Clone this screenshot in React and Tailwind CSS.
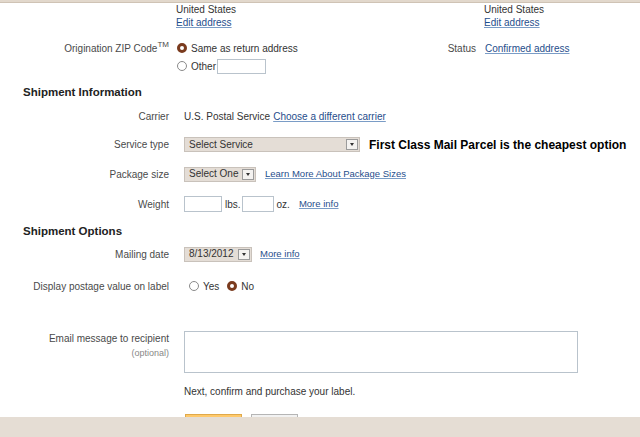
import React from 'react';

const font = { fontFamily: '"Liberation Sans", Arial, sans-serif' };

const Link = ({ children, className = '' }) => (
  <a href="#" className={`text-[#1f4e8c] underline underline-offset-1 decoration-[#7a9cc6] ${className}`}>{children}</a>
);

const Radio = ({ checked }) =>
  checked ? (
    <span className="inline-block w-[10px] h-[10px] rounded-full border-[3px] border-[#7a3b1e] bg-white shrink-0" />
  ) : (
    <span className="inline-block w-[10px] h-[10px] rounded-full border border-[#8a8a8a] bg-white shrink-0" />
  );

const Select = ({ text, width }) => (
  <div className={`flex items-center h-[15px] bg-[#e4ddd6] border border-[#c9c2bb] ${width}`}>
    <span className="flex-1 pl-[4px] text-[10px] text-[#333] leading-none">{text}</span>
    <span className="w-[12px] h-[11px] mr-[1px] bg-[#f4f2f0] border border-[#9b9b9b] flex items-center justify-center">
      <span className="w-0 h-0 border-l-[2px] border-r-[2px] border-t-[3px] border-l-transparent border-r-transparent border-t-[#333]" />
    </span>
  </div>
);

const Row = ({ label, h, children, className = '' }) => (
  <div className={`flex items-center ${h} ${className}`}>
    <div className="w-[169px] text-right text-[#4a4a4a] shrink-0">{label}</div>
    <div className="ml-[15px] flex items-center">{children}</div>
  </div>
);

export default function App() {
  return (
    <div className="relative w-[640px] h-[437px] overflow-hidden bg-white text-[10px] text-[#333]" style={font}>
      <div className="h-[3px] bg-[#e2d8cc] border-b border-[#cfc3b5]" />

      {/* addresses */}
      <div className="flex">
        <div className="w-[484px] pl-[176px]">
          <div className="h-[13px] leading-[13px]">United States</div>
          <div className="h-[14px] leading-[14px]"><Link>Edit address</Link></div>
        </div>
        <div>
          <div className="h-[13px] leading-[13px]">United States</div>
          <div className="h-[14px] leading-[14px]"><Link>Edit address</Link></div>
        </div>
      </div>

      {/* origination zip */}
      <div className="flex mt-[9px]">
        <div className="w-[440px]">
          <div className="flex items-center h-[18px]">
            <div className="w-[169px] text-right text-[#4a4a4a]">
              Origination ZIP Code<span className="text-[8px] relative -top-[5px]">TM</span>
            </div>
            <div className="ml-[8px] flex items-center gap-[4px]">
              <Radio checked />
              <span>Same as return address</span>
            </div>
          </div>
          <div className="flex items-center h-[18px] pl-[177px] gap-[4px]">
            <Radio />
            <span>Other</span>
            <span className="w-[49px] h-[15px] border border-[#b9c3cc] bg-white -ml-[3px]" />
          </div>
        </div>
        <div className="flex items-center h-[18px]">
          <span className="w-[36px] text-right text-[#4a4a4a]">Status</span>
          <Link className="ml-[9px]">Confirmed address</Link>
        </div>
      </div>

      {/* shipment information */}
      <div className="mt-[8px] h-[20px] flex items-center pl-[23px] text-[11.5px] font-bold text-[#222]">Shipment Information</div>

      <Row label="Carrier" h="h-[27px]">
        <span>U.S. Postal Service</span>
        <Link className="ml-[3px]">Choose a different carrier</Link>
      </Row>

      <Row label="Service type" h="h-[29px]">
        <Select text="Select Service" width="w-[176px]" />
        <span className="ml-[9px] text-[12px] font-bold text-black">First Class Mail Parcel is the cheapest option</span>
      </Row>

      <Row label="Package size" h="h-[30px]">
        <Select text="Select One" width="w-[72px]" />
        <Link className="ml-[9px] text-[9.5px]">Learn More About Package Sizes</Link>
      </Row>

      <Row label="Weight" h="h-[30px]">
        <span className="w-[38px] h-[16px] border border-[#b9c3cc] bg-white" />
        <span className="ml-[3px]">lbs.</span>
        <span className="w-[32px] h-[16px] border border-[#b9c3cc] bg-white ml-[1px]" />
        <span className="ml-[3px]">oz.</span>
        <Link className="ml-[9px] text-[9.5px]">More info</Link>
      </Row>

      <div className="mt-[1px] h-[23px] flex items-center pl-[23px] text-[11.5px] font-bold text-[#222]">Shipment Options</div>

      <Row label="Mailing date" h="h-[22px]">
        <Select text="8/13/2012" width="w-[68px]" />
        <Link className="ml-[8px] text-[9.5px]">More info</Link>
      </Row>

      <Row label="Display postage value on label" h="h-[42px]">
        <span className="ml-[5px] flex items-center gap-[4px]">
          <Radio />
          <span>Yes</span>
        </span>
        <span className="ml-[8px] flex items-center gap-[4px]">
          <Radio checked />
          <span>No</span>
        </span>
      </Row>

      {/* email */}
      <div className="flex mt-[24px]">
        <div className="w-[169px] text-right text-[#4a4a4a] shrink-0 pt-[1px]">
          <div className="h-[14px] leading-[14px]">Email message to recipient</div>
          <div className="h-[14px] leading-[14px] text-[9px] text-[#888]">(optional)</div>
        </div>
        <div className="ml-[15px] w-[394px] h-[42px] border border-[#b9c3cc] bg-white" />
      </div>

      <div className="mt-[12px] pl-[184px] h-[14px] leading-[14px]">Next, confirm and purchase your label.</div>

      <div className="mt-[15px] pl-[185px] flex gap-[9px]">
        <div className="w-[57px] h-[22px] bg-[#ffc96b] border border-[#e0a94a]" />
        <div className="w-[47px] h-[22px] bg-[#f2f2f2] border border-[#b5b5b5]" />
      </div>

      <div className="absolute left-0 right-0 bottom-0 h-[20px] bg-[#e5ddd4]" />
    </div>
  );
}
